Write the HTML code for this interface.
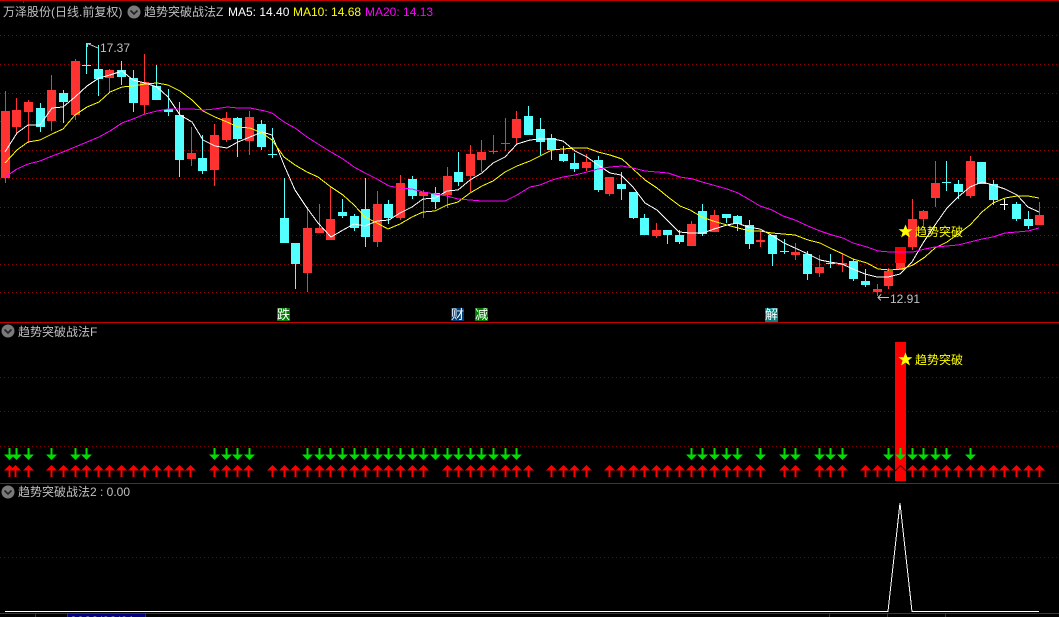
<!DOCTYPE html>
<html lang="zh"><head><meta charset="utf-8"><title>趋势突破战法</title>
<style>
html,body{margin:0;padding:0;background:#000;width:1059px;height:617px;overflow:hidden}
svg{display:block;position:absolute;left:0;top:0}
text{font-family:"Liberation Sans","WenQuanYi Zen Hei","Noto Sans CJK SC",sans-serif;font-size:12px;fill:#c0c0c0}
.c{font-family:"WenQuanYi Zen Hei","Liberation Sans","Noto Sans CJK SC",sans-serif}
</style></head><body>
<svg width="1059" height="617" viewBox="0 0 1059 617" xmlns="http://www.w3.org/2000/svg">
<defs>
<g id="u"><path d="M.5 0L6 5.5H-5z" fill="#f00"/><rect x="-.5" y="5" width="2" height="7" fill="#f00"/></g>
<g id="d"><rect x="-.5" y="0" width="2" height="7" fill="#0d0"/><path d="M-5 6.5H6L.5 12z" fill="#0d0"/></g>
<g id="i"><circle r="6.5" fill="#7a7a7a"/><path d="M-3.5-1.5L0 2L3.5-1.5" fill="none" stroke="#222" stroke-width="1.6"/></g>
</defs>
<rect width="1059" height="617" fill="#000"/>
<!-- grid -->
<g stroke="#960000" stroke-width="1" stroke-dasharray="1 3" shape-rendering="crispEdges">
<path d="M0 35.5H1059M0 64.5H1059M0 93.5H1059M0 121.5H1059M0 150.5H1059M0 178.5H1059M0 207.5H1059M0 235.5H1059M0 264.5H1059M0 292.5H1059"/>
</g>
<g stroke="#800000" stroke-width="1" stroke-dasharray="1 3" shape-rendering="crispEdges">
<path d="M0 377.5H1059M0 411.5H1059M0 446.5H1059M0 557.5H1059"/>
</g>
<!-- separators -->
<g fill="#c00000" shape-rendering="crispEdges">
<rect x="0" y="0" width="1059" height="1"/>
<rect x="0" y="322" width="1059" height="1"/>
<rect x="0" y="483" width="1059" height="1"/>
<rect x="0" y="613" width="1059" height="1"/>
<rect x="23" y="0" width="1" height="3"/>
<rect x="35" y="614" width="1" height="3"/>
<rect x="829" y="614" width="1" height="3"/>
<rect x="887" y="614" width="1" height="3"/>
<rect x="945" y="614" width="1" height="3"/>
</g>
<!-- wicks -->
<path shape-rendering="crispEdges" fill="none" stroke="#ff3232" stroke-width="1" d="M5.5 91V183M16.5 98V133M28.5 100V143M51.5 75V131M75.5 59V120M109.5 69V92M144.5 54V114M191.5 127V166M214.5 124V186M226.5 112V142M249.5 111V155M307.5 207V292M319.5 204V233M330.5 186V240M377.5 191V247M400.5 175V220M423.5 190V218M447.5 167V208M470.5 145V192M481.5 140V172M516.5 111V144M586.5 154V171M609.5 177V196M656.5 223V238M691.5 221V246M714.5 210V232M795.5 243V260M819.5 255V277M888.5 268V289M912.5 199V250M923.5 210V228M935.5 161V207M970.5 156V198M1039.5 202V225M493.5 135V154M505.5 118V151M760.5 231V247M842.5 254V272M877.5 284V296"/>
<path shape-rendering="crispEdges" fill="none" stroke="#54ffff" stroke-width="1" d="M40.5 103V132M63.5 90V123M98.5 45V96M121.5 61V85M133.5 70V112M156.5 65V100M168.5 89V116M179.5 102V177M202.5 135V174M237.5 117V157M261.5 120V150M284.5 178V243M295.5 243V289M342.5 199V218M354.5 214V231M365.5 178V247M388.5 200V224M412.5 176V199M435.5 187V209M458.5 152V186M528.5 106V135M540.5 118V155M551.5 134V160M563.5 146V162M574.5 153V172M598.5 156V192M621.5 172V200M633.5 192V219M644.5 214V235M667.5 230V244M679.5 230V244M702.5 204V236M726.5 214V223M737.5 215V231M749.5 220V249M772.5 235V266M807.5 251V280M853.5 259V281M865.5 269V287M958.5 180V199M981.5 162V184M993.5 180V205M1016.5 202V221M1028.5 211V229M86.5 43V74M272.5 128V158M784.5 239V254M830.5 254V268M946.5 161V191"/>
<!-- bodies -->
<path shape-rendering="crispEdges" fill="#ff3232" d="M1 111h9v67h-9zM12 110h9v17h-9zM24 102h9v10h-9zM47 90h9v31h-9zM71 61h9v54h-9zM105 70h9v8h-9zM140 82h9v23h-9zM187 153h9v6h-9zM210 135h9v35h-9zM222 118h9v22h-9zM245 117h9v24h-9zM303 228h9v45h-9zM315 228h9v5h-9zM326 219h9v21h-9zM373 204h9v38h-9zM396 183h9v35h-9zM419 192h9v4h-9zM443 176h9v19h-9zM466 154h9v22h-9zM477 152h9v8h-9zM512 119h9v19h-9zM582 162h9v6h-9zM605 177h9v17h-9zM652 230h9v6h-9zM687 224h9v22h-9zM710 215h9v17h-9zM791 252h9v3h-9zM815 267h9v6h-9zM884 271h9v15h-9zM896 247h9v23h-9zM908 219h9v28h-9zM919 211h9v8h-9zM931 183h9v15h-9zM966 161h9v35h-9zM1035 215h9v10h-9zM489 151h9v1h-9zM501 143h9v1h-9zM756 240h9v2h-9zM838 263h9v2h-9zM873 289h9v3h-9z"/>
<path shape-rendering="crispEdges" fill="#54ffff" d="M36 108h9v19h-9zM59 93h9v9h-9zM94 69h9v10h-9zM117 70h9v7h-9zM129 78h9v25h-9zM152 86h9v14h-9zM164 109h9v3h-9zM175 115h9v45h-9zM198 158h9v13h-9zM233 118h9v21h-9zM257 124h9v23h-9zM280 218h9v25h-9zM291 243h9v21h-9zM338 212h9v4h-9zM350 216h9v12h-9zM361 209h9v28h-9zM384 204h9v14h-9zM408 179h9v17h-9zM431 193h9v9h-9zM454 172h9v10h-9zM524 116h9v19h-9zM536 129h9v13h-9zM547 138h9v12h-9zM559 154h9v7h-9zM570 163h9v6h-9zM594 160h9v30h-9zM617 184h9v5h-9zM629 192h9v26h-9zM640 218h9v17h-9zM663 230h9v5h-9zM675 235h9v7h-9zM698 211h9v23h-9zM722 214h9v4h-9zM733 216h9v8h-9zM745 225h9v19h-9zM768 235h9v19h-9zM803 254h9v20h-9zM849 261h9v18h-9zM861 281h9v4h-9zM954 184h9v8h-9zM977 162h9v22h-9zM989 184h9v16h-9zM1012 204h9v15h-9zM1024 219h9v7h-9zM82 65h9v1h-9zM268 154h9v1h-9zM780 251h9v1h-9zM826 263h9v1h-9zM942 182h9v1h-9z"/>
<!-- indicator bar on main chart -->
<rect x="895" y="247" width="11" height="16" fill="#f00" shape-rendering="crispEdges"/>
<!-- white doji -->
<path shape-rendering="crispEdges" fill="none" stroke="#fff" d="M1000 204.5H1008M1004.5 199V210"/>
<!-- MA lines -->
<polyline shape-rendering="crispEdges" fill="none" stroke="#fff" points="5,152 17,133 28,125 40,125 52,108 63,107 75,97 87,86 99,78 110,75 122,71 133,80 145,83 157,87 168,97 180,115 192,122 203,140 215,146 227,148 238,142 250,137 262,132 272,135 284,165 295,190 307,208 318,223 331,237 343,230 354,224 365,226 377,221 389,220 400,213 412,207 423,199 435,198 447,191 458,190 470,180 482,173 493,163 505,157 517,144 530,140 540,139 553,139 563,141 575,151 587,157 598,165 610,173 621,175 633,187 645,203 657,210 667,220 679,232 690,233 703,233 714,229 727,225 737,223 748,227 760,229 773,236 784,243 795,248 808,254 820,260 830,262 842,264 853,269 865,274 877,277 888,277 900,274 912,262 923,243 935,225 947,208 958,197 970,187 982,182 993,185 1005,189 1017,195 1028,207 1039,212"/>
<polyline shape-rendering="crispEdges" fill="none" stroke="#ff0" points="5,163 17,150 28,142 40,140 52,134 63,129 75,115 87,107 99,102 110,92 122,87 133,86 145,84 157,83 168,85 180,91 192,100 203,111 215,117 227,122 238,127 250,128 262,133 272,140 284,157 295,165 307,172 318,177 331,187 343,195 354,205 365,217 377,223 388,229 400,224 412,217 423,212 435,211 447,205 458,202 470,193 482,186 493,181 505,172 517,166 530,161 540,156 552,150 563,149 575,148 587,148 598,152 610,155 622,159 633,169 645,180 657,188 668,197 680,206 690,210 702,217 713,221 727,225 738,228 750,231 760,231 772,233 783,234 795,235 808,240 820,243 832,249 843,254 853,259 867,263 878,269 890,270 902,269 913,265 925,257 935,248 947,242 958,234 970,225 982,212 993,203 1005,198 1017,196 1028,196 1039,198"/>
<polyline shape-rendering="crispEdges" fill="none" stroke="#f0f" points="5,177 17,169 28,164 40,161 52,156 63,152 75,147 87,142 99,137 110,131 122,123 133,119 145,114 157,111 168,109 180,109 192,109 203,110 215,109 227,107 238,108 250,108 265,111 272,113 284,122 295,128 307,137 318,144 331,152 343,159 354,167 365,173 377,179 389,186 400,188 412,189 423,192 435,194 447,196 458,199 470,200 482,201 505,201 517,195 530,187 540,185 552,180 563,177 575,175 587,172 598,169 610,167 622,166 633,168 645,171 657,172 668,173 680,177 693,179 702,182 713,185 727,189 738,193 750,200 760,206 772,210 783,216 795,220 808,226 820,231 832,235 843,238 853,243 867,247 878,251 890,252 902,252 913,252 925,249 935,247 947,246 958,245 970,242 982,239 993,237 1005,233 1017,232 1028,231 1039,228"/>
<!-- headers -->
<text class="c" x="3" y="16">万泽股份(日线.前复权)</text>
<use href="#i" x="134" y="12"/>
<text class="c" x="144" y="16">趋势突破战法Z</text>
<text x="228" y="16" style="fill:#fff">MA5: 14.40</text>
<text x="293" y="16" style="fill:#ff0">MA10: 14.68</text>
<text x="365" y="16" style="fill:#f0f">MA20: 14.13</text>
<use href="#i" x="8" y="331"/>
<text class="c" x="18" y="336">趋势突破战法F</text>
<use href="#i" x="8" y="492"/>
<text class="c" x="18" y="496">趋势突破战法2 : 0.00</text>
<!-- hi/lo labels -->
<path shape-rendering="crispEdges" fill="none" stroke="#c0c0c0" d="M87.5 47V43.5H91M87.5 43.5L98 48"/>
<text x="100" y="52">17.37</text>
<path shape-rendering="crispEdges" fill="none" stroke="#c0c0c0" d="M878 297.5H889M881 294.5L878 297.5L881 300.5"/>
<text x="890" y="303">12.91</text>
<!-- star signal main -->
<path d="M905.5 224.5L907.4 229.3H912.5L908.4 232.4L909.9 237.5L905.5 234.5L901.1 237.5L902.6 232.4L898.5 229.3H903.6z" fill="#ff0"/>
<text class="c" x="915" y="236" style="fill:#ff0">趋势突破</text>
<!-- event tags -->
<rect x="277" y="308" width="13" height="13" fill="#008000"/><text class="c" x="277" y="319" style="fill:#fff;font-size:13px">跌</text>
<rect x="451" y="308" width="13" height="13" fill="#003c78"/><text class="c" x="451" y="319" style="fill:#fff;font-size:13px">财</text>
<rect x="475" y="308" width="13" height="13" fill="#008000"/><text class="c" x="475" y="319" style="fill:#fff;font-size:13px">减</text>
<rect x="765" y="308" width="13" height="14" fill="#008080"/><text class="c" x="765" y="319" style="fill:#fff;font-size:13px">解</text>
<!-- panel 2 -->
<rect x="895" y="342" width="11" height="139" fill="#f00" shape-rendering="crispEdges"/>
<path d="M905.5 352.5L907.4 357.3H912.5L908.4 360.4L909.9 365.5L905.5 362.5L901.1 365.5L902.6 360.4L898.5 357.3H903.6z" fill="#ff0"/>
<text class="c" x="915" y="364" style="fill:#ff0">趋势突破</text>
<g transform="translate(0,448)">
<use href="#d" x="9"/><use href="#d" x="16"/><use href="#d" x="28"/><use href="#d" x="51"/><use href="#d" x="75"/><use href="#d" x="86"/><use href="#d" x="214"/><use href="#d" x="226"/><use href="#d" x="237"/><use href="#d" x="249"/><use href="#d" x="307"/><use href="#d" x="319"/><use href="#d" x="330"/><use href="#d" x="342"/><use href="#d" x="354"/><use href="#d" x="365"/><use href="#d" x="377"/><use href="#d" x="388"/><use href="#d" x="400"/><use href="#d" x="412"/><use href="#d" x="423"/><use href="#d" x="435"/><use href="#d" x="447"/><use href="#d" x="458"/><use href="#d" x="470"/><use href="#d" x="481"/><use href="#d" x="493"/><use href="#d" x="505"/><use href="#d" x="516"/><use href="#d" x="691"/><use href="#d" x="702"/><use href="#d" x="714"/><use href="#d" x="726"/><use href="#d" x="737"/><use href="#d" x="760"/><use href="#d" x="784"/><use href="#d" x="795"/><use href="#d" x="819"/><use href="#d" x="830"/><use href="#d" x="842"/><use href="#d" x="888"/><use href="#d" x="900"/><use href="#d" x="912"/><use href="#d" x="923"/><use href="#d" x="935"/><use href="#d" x="946"/><use href="#d" x="970"/>
</g>
<g transform="translate(0,465)">
<use href="#u" x="9"/><use href="#u" x="15"/><use href="#u" x="28"/><use href="#u" x="51"/><use href="#u" x="63"/><use href="#u" x="75"/><use href="#u" x="86"/><use href="#u" x="98"/><use href="#u" x="109"/><use href="#u" x="121"/><use href="#u" x="133"/><use href="#u" x="144"/><use href="#u" x="156"/><use href="#u" x="168"/><use href="#u" x="179"/><use href="#u" x="190"/><use href="#u" x="214"/><use href="#u" x="226"/><use href="#u" x="237"/><use href="#u" x="248"/><use href="#u" x="272"/><use href="#u" x="284"/><use href="#u" x="295"/><use href="#u" x="307"/><use href="#u" x="319"/><use href="#u" x="330"/><use href="#u" x="342"/><use href="#u" x="354"/><use href="#u" x="365"/><use href="#u" x="377"/><use href="#u" x="388"/><use href="#u" x="400"/><use href="#u" x="412"/><use href="#u" x="423"/><use href="#u" x="447"/><use href="#u" x="458"/><use href="#u" x="470"/><use href="#u" x="481"/><use href="#u" x="493"/><use href="#u" x="505"/><use href="#u" x="516"/><use href="#u" x="528"/><use href="#u" x="551"/><use href="#u" x="563"/><use href="#u" x="574"/><use href="#u" x="586"/><use href="#u" x="609"/><use href="#u" x="621"/><use href="#u" x="633"/><use href="#u" x="644"/><use href="#u" x="656"/><use href="#u" x="667"/><use href="#u" x="679"/><use href="#u" x="691"/><use href="#u" x="702"/><use href="#u" x="714"/><use href="#u" x="726"/><use href="#u" x="737"/><use href="#u" x="749"/><use href="#u" x="760"/><use href="#u" x="784"/><use href="#u" x="795"/><use href="#u" x="819"/><use href="#u" x="830"/><use href="#u" x="842"/><use href="#u" x="865"/><use href="#u" x="877"/><use href="#u" x="888"/><use href="#u" x="912"/><use href="#u" x="923"/><use href="#u" x="935"/><use href="#u" x="946"/><use href="#u" x="958"/><use href="#u" x="970"/><use href="#u" x="981"/><use href="#u" x="993"/><use href="#u" x="1004"/><use href="#u" x="1016"/><use href="#u" x="1028"/><use href="#u" x="1039"/>
</g>
<path fill="none" stroke="#300" d="M895 471L900.5 465.5L906 471"/>
<!-- panel 3 line -->
<polyline shape-rendering="crispEdges" fill="none" stroke="#fff" points="5,611.5 888,611.5 900,503 912,611.5 1039,611.5"/>
<!-- date box -->
<rect x="67.5" y="613.5" width="78" height="5" fill="#000080" stroke="#c00000"/>
<text x="70" y="625" style="fill:#c0c0c0;letter-spacing:.5px">2022/03/01</text>
</svg>
</body></html>
